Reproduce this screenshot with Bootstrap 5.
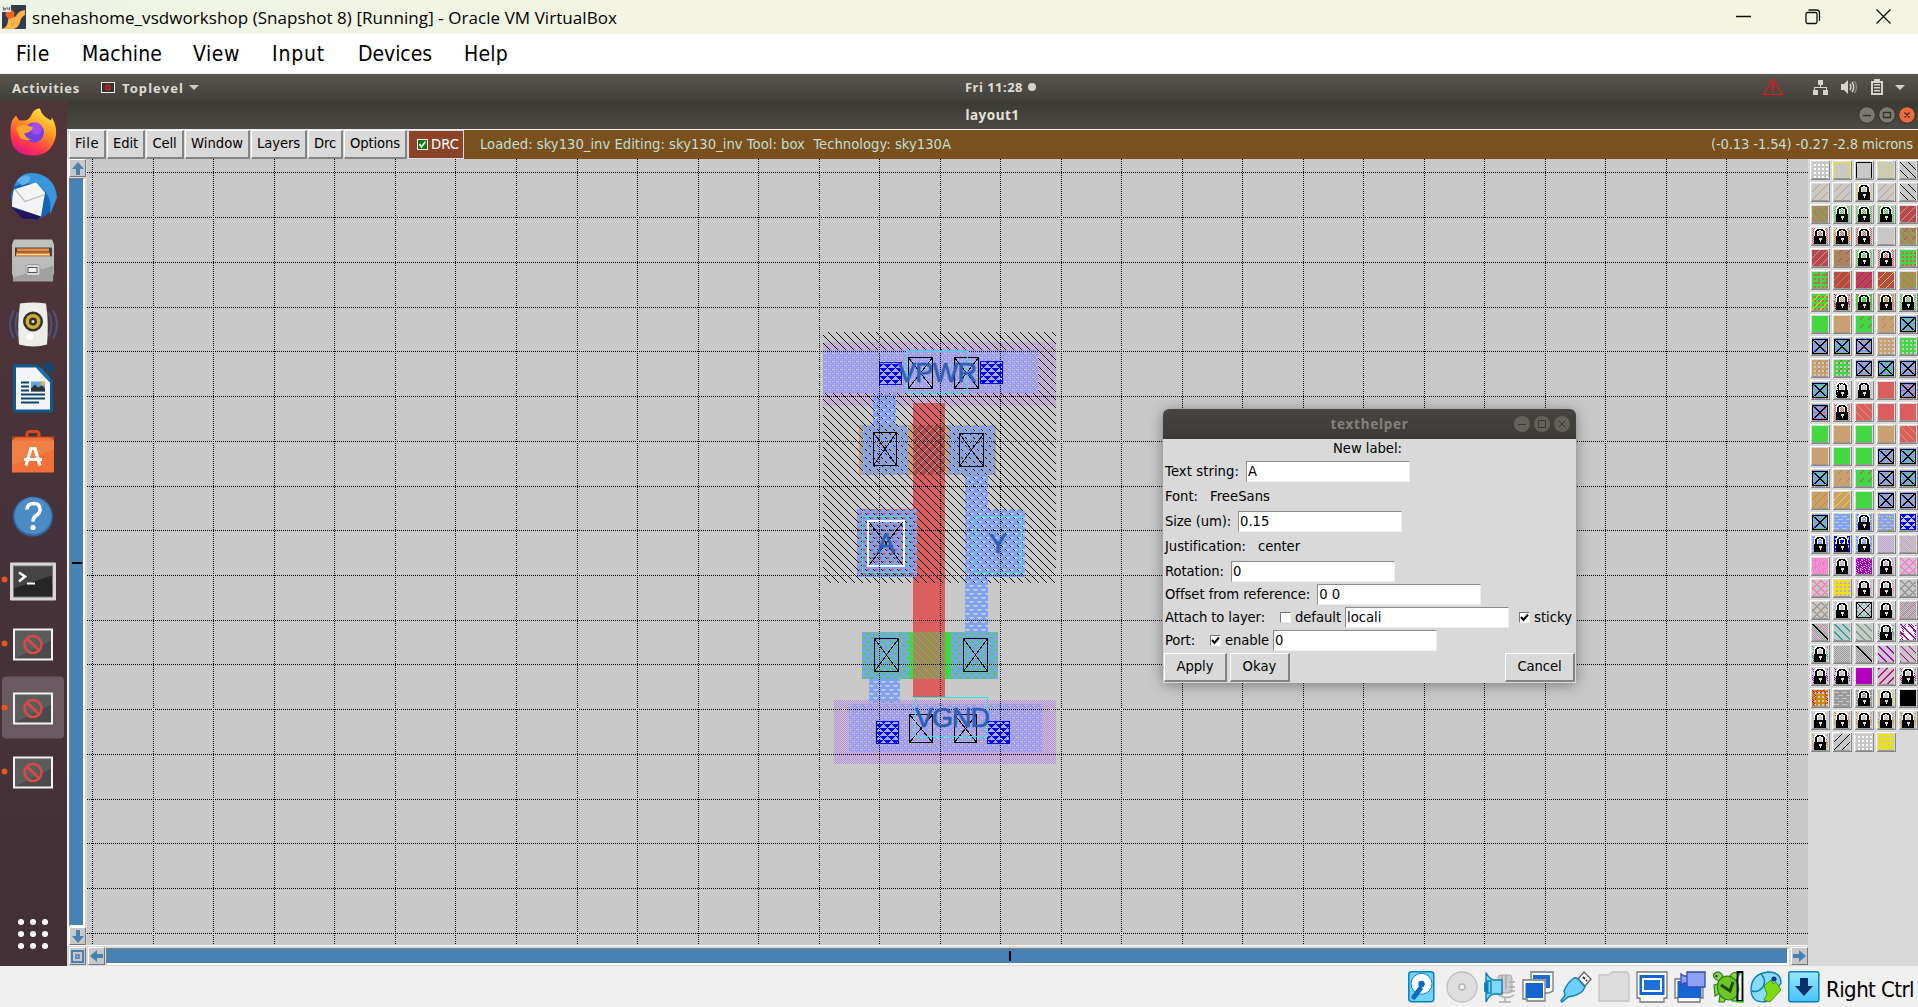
<!DOCTYPE html>
<html lang="en">
<head>
<meta charset="utf-8">
<title>snehashome_vsdworkshop</title>
<link rel="stylesheet" href="https://cdn.jsdelivr.net/npm/bootstrap@5.3.0/dist/css/bootstrap.min.css">
<style>
html,body{height:100%;overflow:hidden}
body{font-family:"DejaVu Sans",sans-serif;font-size:13.2px;line-height:1;color:#000;background:#f0f0f0}
svg{display:block;flex:none}
.fit{white-space:pre;display:inline-block}
.host-title{height:34px;background:linear-gradient(90deg,#eef4e6,#f3f4e1 35%,#f3f4e1);font:17px "Open Sans","Noto Sans",sans-serif}
.host-menu{height:40px;background:#fff;border-bottom:1px solid #eee;padding-top:1px;font:21px "DejaVu Sans Condensed","DejaVu Sans",sans-serif}
.host-menu span{flex:none}
.host-status{height:41px;background:#f0f0f0;font:22px "DejaVu Sans Condensed","DejaVu Sans",sans-serif}
.guest{height:892px}
.top-panel{height:27px;background:linear-gradient(#59564f,#403f3a);color:#dfdbd2;font:bold 13px "Noto Sans",sans-serif}
.dock{width:67px;background:linear-gradient(#513639,#46323a 50%,#443037)}
.win-title{height:28px;background:linear-gradient(#3a3934,#4b4a45);color:#e4e0d8;font:bold 13.5px "Noto Sans",sans-serif}
.three{display:grid;grid-template-columns:1fr auto 1fr;align-items:center}
.tk-bar{height:30px;background:#d9d9d9;border-top:1px solid #f0f0f0;padding-left:2px}
.tk-btn{border:1px solid #fff;border-right:2px solid #848484;border-bottom:2px solid #848484;background:#d9d9d9;height:29px;display:flex;align-items:center;justify-content:center;flex:none;margin-right:1px}
.drc-btn{width:56px;background:#8b4428;color:#fff;border:1px solid #ddd;height:29px;flex:none}
.tk-info{background:#7a501e;color:#c3ded2;height:29px}
.tk-sq{width:17px;height:18px;border:1px solid #fff;border-right-color:#777;border-bottom-color:#777;background:#c8c8c8;display:flex;align-items:center;justify-content:center}
.vbar{width:20px;background:#d9d9d9;border-left:2px solid #f4f4f4}
.vtrough{width:16px;background:#4682b4;border:1px solid #7e7e7e;border-right:2px solid #fff;border-bottom:2px solid #fff}
.hbar{height:21px;background:#d9d9d9;border-top:1px solid #f4f4f4}
.htrough{height:17px;background:#4682b4;border:1px solid #7e7e7e;border-right:2px solid #fff;border-bottom:2px solid #fff}
.work-area{height:786px;background:#c8c8c8}
.palette{width:110px;background:#d9d9d9;padding:1px 0 0 2px;overflow:hidden}
.pal-grid{display:grid;grid-template-columns:repeat(5,20px);gap:2px}
.dialog-win{position:absolute;left:1163px;top:409px;width:413px;height:274px;background:#d9d9d9;border-radius:6px 6px 0 0;box-shadow:0 2px 14px rgba(0,0,0,.38)}
.dialog-head{height:30px;background:linear-gradient(#454440,#3c3b37);border-radius:6px 6px 0 0;color:#85827b;font:bold 13.5px "Noto Sans",sans-serif}
.drow{height:25px;padding-left:2px}
.drow.tight{height:23px;padding-bottom:2px}
.entry{width:164px;height:21px;background:#fff;border:1px solid #8a8a8a;border-right-color:#eee;border-bottom-color:#eee;padding-left:1px;display:flex;align-items:center;flex:none}
.chk{width:11px;height:11px;background:#fff;border:1px solid #777;border-right-color:#eee;border-bottom-color:#eee;flex:none}
</style>
<script src="https://cdn.jsdelivr.net/npm/bootstrap@5.3.0/dist/js/bootstrap.bundle.min.js"></script>
</head>
<body class="d-flex flex-column">

<div class="host-title d-flex align-items-center">
  <svg class="ms-0" width="26" height="24" viewBox="-2 0 26 24"><rect width="24" height="24" rx="1" fill="#333c4c"/><path d="M0 24q6-2 6-9l2-5 5 2-1 4q-2 7-7 8zM12 16q2-10 11-11v5q-4 2-5 7t-6 7H5q6-2 7-8z" fill="#fdb34a"/><circle cx="8" cy="9" r="4.5" fill="#f0602a"/><rect width="9" height="7" fill="#e6e9ea"/><path d="M1.5 2v3h2V3.500h-2M5 2v2h2.500M7.500 2v3.500" stroke="#555" stroke-width=".8" fill="none"/></svg>
  <span class="fit" data-w="585" style="margin-left:6px">snehashome_vsdworkshop (Snapshot 8) [Running] - Oracle VM VirtualBox</span>
  <svg class="ms-auto" width="182" height="34" viewBox="1736 0 182 34" fill="none" stroke="#111" stroke-width="1.3"><path d="M1736 16.500h15M1876.500 9.500l14 14M1890.500 9.500l-14 14"/><rect x="1806" y="12.500" width="11" height="11" rx="1.500"/><path d="M1808.500 10h8q3 0 3 3v8"/></svg>
</div>
<div class="host-menu d-flex align-items-center" id="hm"></div>

<div class="guest d-flex flex-column">
  <div class="top-panel three">
    <div class="d-flex align-items-center" style="padding-left:12px"><span class="fit" data-w="68">Activities</span>
      <svg width="14" height="11" viewBox="0 0 14 11" style="margin:0 7px 0 21px"><rect x=".5" y=".5" width="13" height="10" fill="#333" stroke="#eee"/><circle cx="7" cy="5.500" r="2.600" stroke="#e02a2a" fill="#6b1f22"/><path d="M5 3.500l4 4" stroke="#e02a2a"/></svg>
      <span class="fit" data-w="62">Toplevel</span><svg width="10" height="5" viewBox="0 0 10 5" style="margin-left:5px"><path d="M0 0h10L5 5z" fill="#d0ccc4"/></svg></div>
    <div class="d-flex align-items-center" style="padding:0 0 2px 83px"><span class="fit" data-w="58">Fri 11:28</span><svg width="8" height="8" style="margin-left:5px"><circle cx="4" cy="4" r="4" fill="#d6d3cd"/></svg></div>
    <svg class="ms-auto" width="155" height="27" viewBox="1763 74 155 27"><path d="M1773 79l9.500 15.500h-19z" fill="none" stroke="#ee1616" stroke-width="1.200"/><path d="M1773 83.500v6M1773 91v2" stroke="#ee1616" stroke-width="2"/><g fill="#d6d3cd"><path d="M1818 80h5v5h-2v2h6v3h1v5h-5v-5h3v-2h-11v2h3v5h-5v-5h1v-3h6v-2h-2zM1841 84h3l4-4v14l-4-4h-3z"/><path d="M1895 85h10l-5 5z"/><path fill-rule="evenodd" d="M1871 81h3v-2h6v2h3v14h-12zM1873 83v10h8v-10z"/><path d="M1874 84h6v1.500h-6zM1874 87h6v1.500h-6zM1874 90h6v1.500h-6z"/></g><path d="M1850 84q2 3 0 6M1852 82q3.500 5 0 10" stroke="#d6d3cd" stroke-width="1.500" fill="none"/><path d="M1854.500 81q4 6 0 12" stroke="#85827b" stroke-width="1.500" fill="none"/></svg>
  </div>
  <div class="d-flex flex-grow-1" style="height:865px">
    <div class="dock" id="dock"></div>
    <div class="flex-grow-1 d-flex flex-column" style="min-width:0">
      <div class="win-title three"><span></span><span class="fit" data-w="54">layout1</span>
        <svg class="ms-auto" width="60" height="28" viewBox="1858 101 60 28"><g fill="#7c7a72" stroke="#2f2e2a"><circle cx="1867" cy="115" r="8.300"/><circle cx="1887" cy="115" r="8.300"/><circle cx="1907" cy="115" r="8.300" fill="#ee6840"/></g><path d="M1863 115.500h8M1883.500 112.500h7v5h-7zM1904.500 112.500l5 5M1909.500 112.500l-5 5" stroke="#33322e" stroke-width="1.300" fill="none"/></svg>
      </div>
      <div class="tk-bar d-flex" id="tkbar"></div>
      <div class="d-flex" style="height:807px">
        <div class="d-flex flex-column" style="width:1741px">
          <div class="d-flex work-area">
            <div class="vbar d-flex flex-column"><div class="tk-sq"><svg width="12" height="13" viewBox="0 0 12 13"><path d="M6 0l6 7H8v6H4V7H0z" fill="#4682b4"/></svg></div><div class="vtrough my-auto" style="height:749px"><svg width="13" height="746"><path d="M2 384h10" stroke="#000" stroke-width="2"/></svg></div><div class="tk-sq"><svg width="12" height="13" viewBox="0 0 12 13"><path d="M6 13L0 6h4V0h4v6h4z" fill="#4682b4"/></svg></div></div>
            <svg id="cv" width="1721" height="786" viewBox="87 159 1721 786" shape-rendering="crispEdges"></svg>
          </div>
          <div class="hbar d-flex align-items-center"><div class="tk-sq" style="margin-left:2px"><svg width="13" height="13" fill="none" stroke="#4682b4"><rect x="1" y="1" width="11" height="11" stroke-width="2"/><rect x="5" y="5" width="3" height="3" stroke-width="1.600"/></svg></div><div class="tk-sq" style="margin:0 1px 0 2px"><svg width="13" height="12" viewBox="0 0 13 12"><path d="M0 6l7-6v4h6v4H7v4z" fill="#4682b4"/></svg></div><div class="htrough flex-grow-1"><svg width="1100" height="14"><path d="M903 2v10" stroke="#000" stroke-width="2"/></svg></div><div class="tk-sq" style="margin-left:2px"><svg width="13" height="12" viewBox="0 0 13 12"><path d="M13 6L6 0v4H0v4h6v4z" fill="#4682b4"/></svg></div></div>
        </div>
        <div class="palette"><div class="pal-grid" id="pal"></div></div>
      </div>
    </div>
  </div>
</div>

<div class="host-status d-flex align-items-center" style="padding-left:1408px">
  <div class="d-flex" style="gap:6px">
    <svg width="32" height="32" viewBox="0 0 32 32"><rect x=".8" y=".8" width="25" height="30" rx="3" fill="#6fd4ff" stroke="#0a7fc0" stroke-width="1.500"/><circle cx="13.500" cy="12.800" r="10.500" fill="#fff" stroke="#0a7fc0"/><circle cx="13.500" cy="13" r="3.200" fill="#0a6cc4"/><path d="M12 18L6 26" stroke="#0a6cc4" stroke-width="5" stroke-linecap="round"/></svg>
    <svg width="32" height="32" viewBox="0 0 32 32"><circle cx="16" cy="16" r="15" fill="#dedede" stroke="#bdbdbd" stroke-width="1.300"/><circle cx="16" cy="16" r="3" fill="#f4f4f4" stroke="#b5b5b5" stroke-width="1.500"/></svg>
    <svg width="32" height="32" viewBox="0 0 32 32"><rect x="14" y="4" width="14" height="18" rx="3" fill="#ccc" stroke="#aaa"/><path d="M18 4v14M22 4v14M25 11h6M25 16h6M25 20h6M12 22q10 8 18 2M21 26v5M15 31h12" stroke="#aaa" stroke-width="1.500" fill="none"/><path d="M.8 12v8h3v-8zM3 10h4v12H3zM2 1.500Q5 8 10 9h8v14h-8q-5 1-8 8z" fill="#7fd6ff" stroke="#0a7fc0" stroke-width="1.400"/></svg>
    <svg width="32" height="32" viewBox="0 0 32 32"><g stroke="#777" stroke-width="1.300" fill="#fff"><path d="M9 1h22v19l-5 2H9z"/><path d="M1 9h22v21H5v-2H1z"/></g><path d="M11 4h17v13h-4V8H11z" fill="#1f6ad4"/><path d="M3.500 12H21v15H3.500z" fill="#1464d2"/></svg>
    <svg width="32" height="32" viewBox="0 0 32 32"><path d="M18 8l6-7 7 7-6 7z" fill="#fff" stroke="#666" stroke-width="1.400"/><path d="M23 6l2 2M26 9l1 1" stroke="#333" stroke-width="2"/><path d="M14 7q3-1 6 3t5 6q-3 7-12 9l-5 1-6 5-1-1 4-6-1-4q3-8 10-13z" fill="#70d0fa" stroke="#0a7fc0" stroke-width="1.400"/></svg>
    <svg width="32" height="32" viewBox="0 0 32 32"><path d="M1 4h10l3-3h15l2 3v26H1z" fill="#dcdcdc" stroke="#c2c2c2" stroke-width="1.300"/></svg>
    <svg width="32" height="32" viewBox="0 0 32 32"><path d="M1 1h30v26h-3v4H4v-4H1z" fill="#fff" stroke="#777" stroke-width="1.300"/><path d="M3.500 4h25v20h-25z" fill="#1464d2"/><path d="M7 8h18v12H7z" fill="#1e6edb" stroke="#fff" stroke-width="2"/></svg>
    <svg width="32" height="32" viewBox="0 0 32 32"><path d="M1 8h28v19h-3v4H4v-4H1z" fill="#fff" stroke="#777" stroke-width="1.300"/><path d="M3.500 10h24v17h-24z" fill="#1464d2"/><path d="M13 1h18v15H13zM7 3l3 2h3v7h-3l-3 2z" fill="#8da2f6" stroke="#3c45b4" stroke-width="1.300"/></svg>
    <svg width="32" height="32" viewBox="0 0 32 32"><g fill="#8ad84a" stroke="#2f7d10" stroke-width="1.200"><path d="M2 3q5-5 9 2l-4 5Q0 7 2 3zM18 5q3-5 10-3l-4 8zM2 14l6-2v10l-5 3zM8 25l6 2-2 4H7zM19 25h6v5h-5z"/><ellipse cx="16" cy="17" rx="10.500" ry="12" fill="#6cc522" transform="rotate(-20 16 17)"/></g><circle cx="4.500" cy="5" r="1.200" fill="#123"/><path d="M9 14l9 6 3-9" fill="none" stroke="#1c4c0a" stroke-width="3"/><path d="M25.500 1h5v29h-5z" fill="none" stroke="#000" stroke-width="1.800"/><path d="M25 31h7" stroke="#0f0" stroke-width="1.500"/></svg>
    <svg width="32" height="32" viewBox="0 0 32 32"><path d="M1 19Q1 3 18 1q13 0 13 11L18 30Q2 34 1 19z" fill="#8adbff" stroke="#0a7fc0" stroke-width="1.400"/><path d="M11 3q6 6 2 13-5 6-11 4" fill="none" stroke="#0a7fc0" stroke-width="1.400"/><circle cx="24" cy="8" r="2.600" fill="#123f80"/><path d="M14 15l7-6 2 4 3-2 5 8-11 12-6-2 3-6z" fill="#7ddb14" stroke="#45990c"/></svg>
    <svg width="32" height="32" viewBox="0 0 32 32"><defs><linearGradient id="dn" x2="0" y2="1"><stop stop-color="#9ae6ff"/><stop offset="1" stop-color="#45c3fb"/></linearGradient></defs><rect x=".8" y=".8" width="30" height="30" rx="2" fill="url(#dn)" stroke="#0a7fc0" stroke-width="1.500"/><path d="M12 7h8v8h5l-9 10-9-10h5z" fill="#0b2f6b"/></svg>
  </div>
  <span class="fit" data-w="88" style="margin:5px 0 0 6px">Right Ctrl</span>
</div>

<div class="dialog-win">
  <div class="dialog-head three"><span></span><span class="fit" data-w="78">texthelper</span>
    <svg class="ms-auto" width="64" height="30" viewBox="0 0 64 30"><g fill="#62615b"><circle cx="10" cy="15" r="8"/><circle cx="30" cy="15" r="8"/><circle cx="50" cy="15" r="8"/></g><path d="M6 15.500h8M26.500 11.500h7v7h-7zM47 12l6 6M53 12l-6 6" stroke="#37362f" fill="none"/></svg></div>
  <div class="d-flex align-items-center justify-content-center" style="height:20px;padding-right:4px"><span class="fit" data-w="69">New label:</span></div>
  <div class="drow d-flex align-items-center"><span class="fit" data-w="74">Text string:</span><div class="entry" style="margin-left:7px">A</div></div>
  <div class="drow d-flex align-items-center"><span class="fit" data-w="33">Font:</span><span class="fit" data-w="60" style="margin-left:12px">FreeSans</span></div>
  <div class="drow d-flex align-items-center"><span class="fit" data-w="66">Size (um):</span><div class="entry" style="margin-left:7px">0.15</div></div>
  <div class="drow d-flex align-items-center"><span class="fit" data-w="81">Justification:</span><span class="fit" data-w="42" style="margin-left:12px">center</span></div>
  <div class="drow d-flex align-items-center"><span class="fit" data-w="59">Rotation:</span><div class="entry" style="margin-left:7px">0</div></div>
  <div class="drow tight d-flex align-items-center"><span class="fit" data-w="145">Offset from reference:</span><div class="entry" style="margin-left:7px">0 0</div></div>
  <div class="drow tight d-flex align-items-center"><span class="fit" data-w="100">Attach to layer:</span><i class="chk" style="margin-left:15px"></i><span class="fit" data-w="46" style="margin-left:4px">default</span><div class="entry" style="margin-left:4px">locali</div><i class="chk" style="margin-left:10px"><svg width="9" height="9"><path d="M1 4l2.500 3L8 1.500" stroke="#000" stroke-width="2" fill="none"/></svg></i><span class="fit" data-w="38" style="margin-left:4px">sticky</span></div>
  <div class="drow tight d-flex align-items-center"><span class="fit" data-w="30">Port:</span><i class="chk" style="margin-left:15px"><svg width="9" height="9"><path d="M1 4l2.500 3L8 1.500" stroke="#000" stroke-width="2" fill="none"/></svg></i><span class="fit" data-w="44" style="margin-left:4px">enable</span><div class="entry" style="margin-left:4px">0</div></div>
  <div class="d-flex" style="padding:0 1px"><div class="tk-btn" style="width:63px"><span class="fit" data-w="37">Apply</span></div><div class="tk-btn" style="width:60px;margin-left:2px"><span class="fit" data-w="34">Okay</span></div><div class="tk-btn ms-auto me-0" style="width:70px"><span class="fit" data-w="44">Cancel</span></div></div>
</div>

<script>
const $=id=>document.getElementById(id);
/* host menu: label, left edge, text width */
let cx=0;
$('hm').innerHTML=[['File',16,34],['Machine',82,80],['View',193,47],['Input',272,53],['Devices',358,74],['Help',464,44]].map(([t,x,w])=>{const m=x-cx;cx=x+w;return `<span class="fit" data-w="${w}" style="margin-left:${m}px">${t}</span>`}).join('');
$('tkbar').innerHTML=[['File',37,24],['Edit',38,25],['Cell',38,24],['Window',65,52],['Layers',56,43],['Drc',35,22],['Options',63,50]].map(([t,w,f])=>`<div class="tk-btn" style="width:${w}px"><span class="fit" data-w="${f}">${t}</span></div>`).join('')+
`<div class="drc-btn d-flex align-items-center"><svg width="11" height="11" style="margin:0 3px 0 8px"><path d="M0 0h11v11H0z" fill="#eee"/><path d="M1 1h9v9H1z" fill="#0a7a12"/><path d="M2.500 5l2 3 4-5.500" stroke="#fff" stroke-width="1.800" fill="none"/></svg><span class="fit" data-w="28">DRC</span></div>
<div class="tk-info flex-grow-1 d-flex align-items-center justify-content-between" style="padding:0 5px 0 16px"><span class="fit" data-w="471">Loaded: sky130_inv Editing: sky130_inv Tool: box  Technology: sky130A</span><span class="fit" data-w="202">(-0.13 -1.54) -0.27 -2.8 microns</span></div>`;

/* dock */
const noWin='<rect x="14" y="17" width="38" height="30" fill="#4a4a4a" stroke="#f2f2f2" stroke-width="2"/><path d="M15 18h36v10L15 46z" fill="#fff" opacity=".1"/><circle cx="33" cy="32" r="8.500" fill="none" stroke="#d64a48" stroke-width="2.500"/><path d="M27 26l12 12" stroke="#d64a48" stroke-width="2.500"/>';
const run='<circle cx="4.500" cy="31" r="3" fill="#e95420"/>';
const icons=[
'<defs><linearGradient id="ff" x1=".8" y1="0" x2=".3" y2="1"><stop stop-color="#fff04c"/><stop offset=".4" stop-color="#ff9c20"/><stop offset=".75" stop-color="#ff3a4a"/><stop offset="1" stop-color="#e21587"/></linearGradient></defs><path d="M12 20l4-5 3 5 6 0q5-1 7-7 3-5 8-5 1 5 6 9l5 3 1-3q5 9 4 18Q52 55 33 55 11 55 10.500 34 10 26 12 20z" fill="url(#ff)"/><circle cx="34" cy="32" r="10" fill="#7540e0"/><circle cx="36" cy="28" r="6" fill="#a04cf0"/><path d="M16 27q8-5 17 0-2 5-9 6 3 6 8 6-12 3-14-6z" fill="#ffa428"/>',
'<circle cx="33" cy="33" r="22" fill="#1b63b8"/><path d="M14 22Q20 6 37 9q18 4 20 24l-7 17q2-14-4-22T24 18z" fill="#3796dc"/><path d="M17 16q8-8 13-3 0 6-8 8z" fill="#5cb3ea"/><path d="M14 25l22-7 9 10-4 24-29-10q0-11 2-17z" fill="#f4f4f6"/><path d="M15 25l10 12 20-7" stroke="#bbb" fill="none" stroke-width="1.300"/><path d="M12 43l29 9 4-5-7 8-16-1z" fill="#24125e"/>',
'<path d="M14 11h38l2 5v30H12V16z" fill="#c0c0be"/><path d="M15 19h37v10H15z" fill="#444"/><path d="M17 20h32v3H17zM16 24h34v4H16z" fill="#f08a38"/><path d="M17 26h32" stroke="#ffe2b0"/><path d="M12 28h42l-1 25H13z" fill="#a0a09e"/><path d="M12 28h42v9L13 49z" fill="#bcbcba"/><rect x="26" y="36" width="14" height="11" rx="2" fill="#d8d8d8" stroke="#999"/><rect x="28" y="39" width="9" height="5" fill="#eee" stroke="#555"/>',
'<g fill="none" stroke="#4c5478" stroke-width="2"><path d="M14 18q-8 14 0 28M53 18q8 14 0 28M18 20q-5 12 0 24M49 20q5 12 0 24"/></g><path d="M20 11q13-2 26 0 3 20 1 41-13 4-28 0-2-20 1-41z" fill="#ecece8"/><circle cx="33" cy="29" r="10" fill="#333"/><circle cx="33" cy="29" r="7.500" fill="#cdb12c"/><circle cx="33" cy="29" r="4" fill="#333"/><circle cx="33" cy="29" r="1.500" fill="#ddd"/><circle cx="30" cy="44" r="3.500" fill="#fff"/>',
'<path d="M13 8h24l16 16v32H13z" fill="#0c5a94"/><path d="M41 7h12v12z" fill="#0e4a78"/><path d="M16 11h20l14 15v27H16z" fill="#f4f4f4"/><path d="M36 11l14 15v-5L41 11z" fill="#1670ac"/><path d="M21 26h8M21 30h8M21 34h8M21 38h24M21 42h24M21 46h18" stroke="#0c4670" stroke-width="2"/><rect x="31" y="25" width="14" height="10" fill="#62a8d8"/><path d="M31 35v-3l4-4 3 3 4-2 3 3v3z" fill="#333"/><circle cx="43" cy="27" r="2" fill="#f0b040"/>',
'<path d="M27 18v-4q0-3 3-3h6q3 0 3 3v4" fill="none" stroke="#d8481c" stroke-width="3"/><path d="M12 16h42v6H12z" fill="#c8451a"/><path d="M12 20l4-3h34l4 3v32H12z" fill="#f07038"/><path d="M12 20h42v9L12 45z" fill="#ee8a50" opacity=".6"/><path d="M26 45l5-17h4l5 17M24 39h18" stroke="#fff" stroke-width="3.200" fill="none"/>',
'<circle cx="33" cy="32" r="20" fill="#3465a4"/><circle cx="33" cy="31.500" r="18.500" fill="#4c8cc4"/><path d="M27 25q0-6 7-6 6 0 6 6 0 4-4 6-3 2-3 6" fill="none" stroke="#fff" stroke-width="3.500"/><circle cx="33" cy="43" r="2.600" fill="#fff"/>',
run+'<rect x="10" y="14" width="46" height="38" rx="1" fill="#d6d6d2"/><rect x="13.500" y="17.500" width="39" height="31" fill="#262626" stroke="#777"/><path d="M14 18h38v9L14 40z" fill="#fff" opacity=".14"/><path d="M19 24l6 4-6 5" fill="none" stroke="#fff" stroke-width="2.500"/><path d="M27 35h8" stroke="#fff" stroke-width="2"/>',
run+noWin,'<rect x="2" y="0" width="62" height="62" rx="4" fill="#685a60"/>'+run+noWin,run+noWin];
$('dock').innerHTML=icons.map(s=>`<svg width="67" height="64" viewBox="0 .5 67 64" overflow="visible">${s}</svg>`).join('')+'<svg width="67" height="150">'+[21,33,45].map(x=>[117,129,141].map(y=>`<circle cx="${x}" cy="${y}" r="3" fill="#fff"/>`).join('')).join('')+'</svg>';

/* layout canvas */
const R=(x1,y1,x2,y2,f)=>`<rect x="${x1}" y="${y1}" width="${x2-x1}" height="${y2-y1}" fill="${f}"/>`;
const O=(x1,y1,x2,y2,c,w=1)=>`<rect x="${x1+w/2}" y="${y1+w/2}" width="${x2-x1-w}" height="${y2-y1-w}" fill="none" stroke="${c}" stroke-width="${w}"/>`;
const X=(x1,y1,x2,y2,b=1)=>(b?O(x1,y1,x2,y2,'#000'):'')+`<path d="M${x1} ${y1}L${x2} ${y2}M${x2} ${y1}L${x1} ${y2}" stroke="#000"/>`;
const diag=(id,s,c)=>{let d='';for(let i=0;i<s;i++)d+=`M${i} ${i}h1v1h-1z`;return `<pattern id="${id}" width="${s}" height="${s}" patternUnits="userSpaceOnUse"><path d="${d}" fill="${c}"/></pattern>`};
const fdiag=(id,s,c)=>{let d='';for(let i=0;i<s;i++)d+=`M${i} ${s-1-i}h1v1h-1z`;return `<pattern id="${id}" width="${s}" height="${s}" patternUnits="userSpaceOnUse"><path d="${d}" fill="${c}"/></pattern>`};
let s='<defs>'+diag('well',8,'#000')+diag('gd',8,'#43d843')+fdiag('td',8,'#c8a070')+
`<pattern id="brick" width="8" height="8" patternUnits="userSpaceOnUse"><path d="M0 0h8v1H0zM0 1h1v1H0zM6 1h2v1H6zM0 2h2v1H0zM5 2h3v1H5zM0 3h8v2H0zM2 5h3v1H2zM1 6h5v1H1zM0 7h8v1H0z" fill="#7da3f7"/></pattern>
<pattern id="pur" width="2" height="2" patternUnits="userSpaceOnUse"><path d="M0 0h1v1H0zM1 1h1v1H1z" fill="#bb8de0"/></pattern>
<pattern id="loc" width="4" height="4" patternUnits="userSpaceOnUse"><path d="M0 0h4v1H0zM1 1h3v1H1zM0 2h4v1H0zM0 3h2v1H0zM3 3h1v1H3z" fill="#9d9df0"/></pattern>
<pattern id="bits" width="8" height="8" patternUnits="userSpaceOnUse"><path d="M1 2h1v1H1zM5 6h1v1H5z" fill="#d6a08c"/></pattern>
<pattern id="pbits" width="8" height="8" patternUnits="userSpaceOnUse"><path d="M1 1h2v1H1zM5 5h2v1H5z" fill="#d8b0d0"/></pattern>
<pattern id="gbits" width="8" height="8" patternUnits="userSpaceOnUse"><path d="M3 2h1v1H3zM7 6h1v1H7z" fill="#55b480"/></pattern>
<pattern id="tri" width="8" height="8" patternUnits="userSpaceOnUse"><path d="M0 0h7v1H0zM1 1h5v1H1zM2 2h3v1H2zM3 3h1v1H3zM4 4h4v1H4zM0 4h3v1H0zM5 5h3v1H5zM0 5h2v1H0zM6 6h3v1H6zM0 6h1v1H0zM7 7h1v1H7z" fill="#00f"/></pattern></defs>`;
/* wells, implant, poly and diffusion first; the n-well hatch runs over them */
s+=R(834,700,1056,764,'url(#pur)')+R(823,342,1056,406,'url(#pur)');
s+=R(913,403,945,697,'#db5d5d')+R(859,425,996,475,'#c9a070')+R(913,425,945,475,'#b84850')+R(913,425,945,475,'url(#td)');
s+=R(862,632,998,679,'#43d843')+R(913,632,945,679,'#ab8560')+R(913,632,945,679,'url(#gd)')+R(857,509,917,577,'#db5d5d');
s+=R(823,332,1056,583,'url(#well)');
/* local interconnect */
for(const b of [[869,679,900,703],[965,475,988,632],[873,393,896,425],[862,425,908,475],[949,425,995,475],[862,632,909,679],[951,632,998,679],[857,509,917,577],[965,509,1025,577]])s+=R(...b,'url(#brick)');
s+=R(849,704,1042,752,'url(#loc)')+R(849,704,1042,752,'url(#pbits)')+R(866,711,1027,748,'url(#bits)');
s+=R(823,350,1038,393,'url(#loc)')+R(823,350,1038,393,'url(#pbits)')+R(866,354,1021,388,'url(#gbits)');
for(const [a,b] of [[879,362],[980,361],[876,721],[987,721]])s+=R(a,b,a+23,b+23,'#a9a9f2')+R(a,b,a+23,b+23,'url(#tri)')+O(a,b,a+23,b+23,'#00f');
for(const b of [[908,357,933,389],[954,357,979,389],[873,432,897,466],[959,433,984,467],[874,638,899,672],[963,638,988,672],[909,714,933,743],[954,714,977,743]])s+=X(...b);
s+=X(869,522,903,565,0)+O(867,520,905,567,'#fff',2);
const xs=[92,153,213,274,334,395,455,516,577,637,698,758,819,879,940,1000,1061,1121,1182,1242,1303,1363,1424,1484,1545,1605,1666,1726,1787];
const ys=[172,217,262,307,351,396,441,486,530,575,620,664,709,754,799,843,888,933];
s+='<g stroke="#000" stroke-dasharray="1 1">'+xs.map(x=>`<path d="M${x+.5} 159V945"/>`).join('')+ys.map(y=>`<path d="M87 ${y+.5}H1808"/>`).join('')+'</g>';
for(const b of [[907,351,968,393],[862,516,909,573],[975,516,1022,573],[915,697,988,737]])s+=O(...b,'#2fe3e3');
s+='<g fill="#2d5fb5" stroke="#2d5fb5" stroke-width=".7" font-family="Liberation Sans,sans-serif" font-size="27"><text x="898" y="381.500" textLength="79">VPWR</text><text x="877" y="553">A</text><text x="989" y="553">Y</text><text x="915" y="726.500" textLength="75">VGND</text></g>';
$('cv').innerHTML=s;

/* layer palette: 16px swatches painted from a short code each */
const C={g:'#43d843',t:'#c9a070',r:'#db5d5d',d:'#b84850',b:'#ab8560',y:'#ece400',k:'#000',w:'#fff',u:'#7da3f7',U:'#00f',p:'#c4a6de',P:'#ff7ad0',m:'#a800c8',M:'#d0008c',e:'#20a8a0',o:'#c89000',G:'#999',n:'#c8c8c8'};
const px=(f,c)=>{let d='';for(let y=0;y<16;y++)for(let x=0;x<16;x++)if(f(x,y))d+=`M${x} ${y}h1v1h-1z`;return `<path d="${d}" fill="${C[c]}"/>`};
const F={
'\\':(x,y)=>(x-y+16)%8==0,'/':(x,y)=>(x+y)%8==7,'|':(x,y)=>(x+y)%8==7&&y%8<4,':':(x,y)=>x%4>1&&y%4>1,
'%':(x,y)=>(x+y)%2==0,'=':(x,y)=>!(y%3==2&&(x+(y%2)*4)%8<5),'o':(x,y)=>(x+y)%8<2||(x-y+16)%8<2,
'v':(x,y)=>{const r=y%4,q=(x+(y>>2)%2*4)%8;return q>=r&&q<=6-r||y==0||x==0||x==15||y==15},
'.':(x,y)=>(x*7+y*5)%11<3&&(x<4||x>12||y<3),'z':(x,y)=>(x-y+16)%8<2,'Z':(x,y)=>(x+y)%8<2,'1':(x,y)=>x==y||x==y+1,
'f':(x,y)=>y<1||x<1||x>14,'#':(x,y)=>(x*5+y*3)%7<2&&x%4<3};
const LK='<path d="M4 9V5q0-4 4-4t4 4v4" fill="none" stroke="#fff" stroke-width="4.500"/><path d="M4 9V5q0-3.500 4-3.500T12 5v4" fill="none" stroke="#000" stroke-width="1.600"/><path d="M2 8h12v8H2z" fill="#000"/><path d="M7 10h3v2H9v2H8v-2H7z" fill="#ddd"/>';
function sw(c){ let o='',i=1; o+=`<path d="M0 0h16v16H0z" fill="${C[c[0]]}"/>`;
 while(i<c.length){ const k=c[i];
  if(k=='L'){o+=LK;i++}
  else if(k=='X'){o+=px(F['='],'u')+'<path d="M.5 1.500h15v14H.5zM1 2l14 13M15 2L1 15" fill="none" stroke="#000" stroke-width="1.300"/>';i++}
  else if(k=='x'){o+='<path d="M.5 .5h15v15H.5zM1 1l14 14M15 1L1 15" fill="none" stroke="#000"/>';i++}
  else {o+=px(F[k],c[i+1]);i+=2}
 } return o}
const rows=['n:w nfy nfk n\\y n\\k','n/t n/t n.yL n/t n\\k','b\\g n%gL n%gL n%gL d/t','n%rL n%r.yL n%rL n b\\g|d','d/t b|d n%gL n%rL g:r','g:r|d d/o d/M d/y b\\g/o','g:r/y n%t.ML g.rL t.bL n%gL','g t g|d t|b gX','tX gX tX t:n g:n','t:n|b g:n|d tX gX tX','gX nL.w nL r rX','rX n%rL r\\t r r','g t g t r\\t','t g g tX gX','gX t|b g|d tX gX','t/o t/y g tX tX','gX n=u n=uL n=u\\t nvU','n=uL nvUL n=uL n%p n%p\\t','P#n n%pL m|G#n n%pL noP','noP\\t y:p n.PL n.PL noG','noG\\t nL n\\e/ex nL n%G/P','n%G\\P1k nze nze\\t n.eL wzm.m','n.eL n%G n%G1k nzm nzm\\t','n.mL n.mL m#M nZM n.ML','o:n.M n=G n=GL n.yL k','nL n.oL n.oL n.oL n.oL','n.oL n/k n:w y:n'];
$('pal').innerHTML=rows.flatMap(r=>r.split(' ')).map(c=>`<svg width="20" height="20" shape-rendering="crispEdges"><path d="M0 0h20v20H0z" fill="#fff"/><path d="M20 1v19H1v-1h18V1z" fill="#858585"/><path d="M1 1h17.500v17.500H1z" fill="#d9d9d9"/><path d="M0 20V0h20v1H1v19z" fill="#fff"/><path d="M18 2v17H2v-1h16z" fill="#999"/><svg x="2" y="2" width="16" height="16">${sw(c)}</svg></svg>`).join('');

/* track every label to its nominal width */
document.querySelectorAll('.fit').forEach(e=>{const w=e.getBoundingClientRect().width,t=+e.dataset.w;e.style.letterSpacing=((t-w)/e.textContent.length).toFixed(3)+'px'});
</script>
</body>
</html>
